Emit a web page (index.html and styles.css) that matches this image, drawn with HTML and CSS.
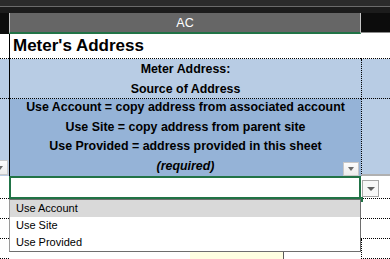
FILE: index.html
```html
<!DOCTYPE html>
<html lang="en">
<head>
  <meta charset="UTF-8">
  <title>Meter's Address</title>
  <link rel="stylesheet" href="styles.css">
</head>
<body>
  <div class="titlebar"></div>
  <div class="ribbon-edge"></div>

  <div class="colheads">
    <div class="corner"></div>
    <div class="colhead">AC</div>
    <div class="colhead-next"></div>
  </div>

  <div class="sheet">
    <!-- row: section title -->
    <div class="cell plain"></div>
    <div class="cell ac title">Meter's Address</div>
    <div class="cell plain"></div>

    <!-- row: field name -->
    <div class="cell light dotted-b"></div>
    <div class="cell ac light dotted-b head">Meter Address:<br>Source of Address</div>
    <div class="cell light dotted-b dotted-l"></div>

    <!-- row: field help -->
    <div class="cell light">
      <span class="filter-btn cut"></span>
    </div>
    <div class="cell ac dark help">
      <div class="help-text">
        Use Account = copy address from associated account<br>
        Use Site = copy address from parent site<br>
        Use Provided = address provided in this sheet<br>
        <em>(required)</em>
      </div>
      <span class="filter-btn"></span>
    </div>
    <div class="cell light dotted-l grey-b"></div>

    <!-- row: selected input cell -->
    <div class="cell plain dotted-b"></div>
    <div class="cell selected"></div>
    <div class="cell plain dotted-b"></div>

    <div class="cell plain dotted-b"></div>
    <div class="cell plain"></div>
    <div class="cell plain dotted-b"></div>

    <div class="cell plain dotted-b"></div>
    <div class="cell plain"></div>
    <div class="cell plain dotted-b"></div>

    <div class="cell plain dotted-b"></div>
    <div class="cell plain"></div>
    <div class="cell plain dotted-b dotted-l"></div>

    <span class="fill-handle"></span>
    <span class="dv-btn"></span>

    <ul class="dv-list">
      <li class="active">Use Account</li>
      <li>Use Site</li>
      <li>Use Provided</li>
    </ul>
    <div class="input-tip"></div>
  </div>
</body>
</html>
```

FILE: styles.css
```css
* { box-sizing: border-box; }

body {
  margin: 0;
  width: 390px;
  height: 259px;
  overflow: hidden;
  background: #ffffff;
  font-family: 'Liberation Sans', Arial, sans-serif;
  color: #000;
}

.titlebar {
  height: 7px;
  background: #2b2b2b;
  border-bottom: 1px solid #6b6b6b;
}
.ribbon-edge {
  height: 6px;
  background: #1c1c1c;
}

.colheads {
  display: grid;
  grid-template-columns: 9px 352px 29px;
  height: 21px;
}
.corner {
  background: #0d0d0d;
}
.colhead {
  background: #666666;
  color: #ffffff;
  font-size: 12.5px;
  line-height: 18px;
  padding-top: 1px;
  text-align: center;
  border-left: 1px solid #c6c6c6;
  border-right: 1px solid #c6c6c6;
  border-bottom: 2px solid #217346;
}
.colhead-next {
  background: #0c0c0c;
  border-bottom: 1px solid #8a8a8a;
  margin-bottom: 1px;
}

.sheet {
  position: relative;
  display: grid;
  grid-template-columns: 9px 352px 29px;
  grid-template-rows: 25px 40px 77px 23px 20px 20px 20px;
}

.cell {
  position: relative;
}
.plain { background: #ffffff; }
.light { background: #b8cce4; }
.dark { background: #95b3d7; }

.dotted-b { border-bottom: 1px dotted #000; }
.dotted-l { border-left: 1px dotted #000; }
.grey-b { border-bottom: 2px solid #b0b0b0; }

.sheet > .plain:nth-child(1),
.sheet > .plain:nth-child(3) {
  border-bottom: 1px dotted #000;
}

.ac {
  border-left: 1px solid #000;
}

.title {
  font-size: 17px;
  font-weight: bold;
  line-height: 24px;
  padding-left: 3px;
  border-bottom: 1px dotted #000;
  background: #ffffff;
}

.head {
  font-size: 12.4px;
  font-weight: bold;
  line-height: 20px;
  text-align: center;
}

.help {
  font-size: 12.4px;
  font-weight: bold;
  line-height: 19.5px;
  text-align: center;
}
.help-text {
  margin-top: -1px;
}

.filter-btn {
  position: absolute;
  right: 2px;
  bottom: 0;
  width: 16px;
  height: 14px;
  background: linear-gradient(#fcfcfc, #ececec);
  border: 1px solid #c8c8c8;
  display: flex;
  align-items: center;
  justify-content: center;
}
.filter-btn::after {
  content: '';
  border-left: 3.5px solid transparent;
  border-right: 3.5px solid transparent;
  border-top: 4px solid #6a6a6a;
}
.filter-btn.cut {
  right: 1px;
  bottom: 1px;
  height: 15px;
}

.selected {
  border: 2px solid #217346;
  background: #ffffff;
}

.fill-handle {
  position: absolute;
  left: 358px;
  top: 163px;
  width: 5px;
  height: 5px;
  background: #217346;
}

.dv-btn {
  position: absolute;
  left: 362px;
  top: 146px;
  width: 17px;
  height: 17px;
  background: #f7f7f7;
  border: 1px solid #a6a6a6;
  display: flex;
  align-items: center;
  justify-content: center;
}
.dv-btn::after {
  content: '';
  border-left: 4px solid transparent;
  border-right: 4px solid transparent;
  border-top: 4px solid #5e5e5e;
}

.dv-list {
  position: absolute;
  left: 9px;
  top: 165px;
  width: 352px;
  height: 53px;
  margin: 0;
  padding: 0;
  list-style: none;
  background: #ffffff;
  border: 1px solid #6e6e6e;
  border-left-color: #9a9a9a;
  font-size: 11px;
  z-index: 2;
}
.dv-list li {
  height: 17px;
  line-height: 17px;
  padding-left: 6px;
}
.dv-list li.active {
  background: #d9d9d9;
}

.input-tip {
  position: absolute;
  left: 190px;
  top: 218px;
  width: 94px;
  height: 12px;
  background: #ffffe1;
  border-right: 1px solid #5a5a5a;
  z-index: 1;
}
```
